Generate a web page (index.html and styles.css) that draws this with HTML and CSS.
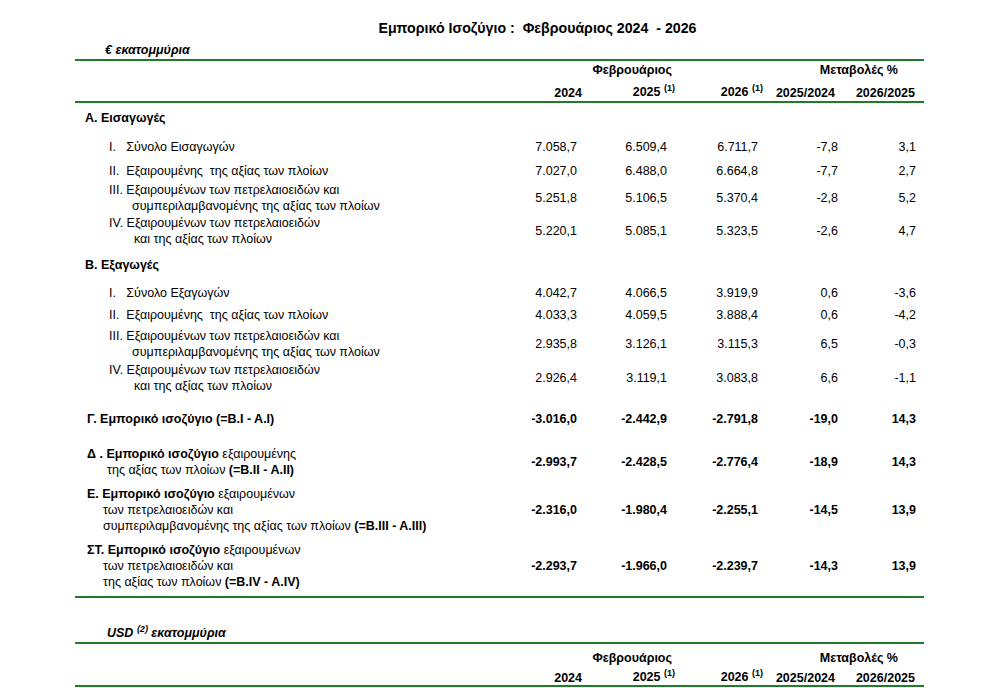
FILE: index.html
```html
<!DOCTYPE html>
<html lang="el">
<head>
<meta charset="utf-8">
<title>Εμπορικό Ισοζύγιο</title>
<link rel="stylesheet" href="styles.css">
</head>
<body>
<div class="page">
  <h1 class="title">Εμπορικό Ισοζύγιο :  Φεβρουάριος 2024  - 2026</h1>

  <div class="unit">€ εκατομμύρια</div>
  <div class="head">
    <div class="row hr1">
      <div></div><div></div>
      <div class="feb">Φεβρουάριος</div>
      <div></div>
      <div class="chg">Μεταβολές %</div>
    </div>
    <div class="row hr2">
      <div></div>
      <div class="h h1">2024</div>
      <div class="h h2">2025 <sup>(1)</sup></div>
      <div class="h h3">2026 <sup>(1)</sup></div>
      <div class="h h4">2025/2024</div>
      <div class="h h5">2026/2025</div>
    </div>
  </div>

  <div class="body">
    <div class="row r30"><div class="sec">A. Εισαγωγές</div></div>
    <div class="row r27"><div class="item">I.   Σύνολο Εισαγωγών</div><div class="v">7.058,7</div><div class="v">6.509,4</div><div class="v">6.711,7</div><div class="v">-7,8</div><div class="v">3,1</div></div>
    <div class="row r21"><div class="item">II.  Εξαιρουμένης  της αξίας των πλοίων</div><div class="v">7.027,0</div><div class="v">6.488,0</div><div class="v">6.664,8</div><div class="v">-7,7</div><div class="v">2,7</div></div>
    <div class="row r34"><div class="item">III. Εξαιρουμένων των πετρελαιοειδών και<span class="l2 i23">συμπεριλαμβανομένης της αξίας των πλοίων</span></div><div class="v">5.251,8</div><div class="v">5.106,5</div><div class="v">5.370,4</div><div class="v">-2,8</div><div class="v">5,2</div></div>
    <div class="row r32"><div class="item">IV. Εξαιρουμένων των πετρελαιοειδών<span class="l2 i25">και της αξίας των πλοίων</span></div><div class="v">5.220,1</div><div class="v">5.085,1</div><div class="v">5.323,5</div><div class="v">-2,6</div><div class="v">4,7</div></div>

    <div class="row r36"><div class="sec">B. Εξαγωγές</div></div>
    <div class="row r19"><div class="item">I.   Σύνολο Εξαγωγών</div><div class="v">4.042,7</div><div class="v">4.066,5</div><div class="v">3.919,9</div><div class="v">0,6</div><div class="v">-3,6</div></div>
    <div class="row r26"><div class="item">II.  Εξαιρουμένης  της αξίας των πλοίων</div><div class="v">4.033,3</div><div class="v">4.059,5</div><div class="v">3.888,4</div><div class="v">0,6</div><div class="v">-4,2</div></div>
    <div class="row r30"><div class="item">III. Εξαιρουμένων των πετρελαιοειδών και<span class="l2 i23">συμπεριλαμβανομένης της αξίας των πλοίων</span></div><div class="v">2.935,8</div><div class="v">3.126,1</div><div class="v">3.115,3</div><div class="v">6,5</div><div class="v">-0,3</div></div>
    <div class="row r40"><div class="item">IV. Εξαιρουμένων των πετρελαιοειδών<span class="l2 i25">και της αξίας των πλοίων</span></div><div class="v">2.926,4</div><div class="v">3.119,1</div><div class="v">3.083,8</div><div class="v">6,6</div><div class="v">-1,1</div></div>

    <div class="row r42 bold"><div class="tot">Γ. Εμπορικό ισοζύγιο (=B.I - A.I)</div><div class="v">-3.016,0</div><div class="v">-2.442,9</div><div class="v">-2.791,8</div><div class="v">-19,0</div><div class="v">14,3</div></div>
    <div class="row r44 bold"><div class="tot">Δ . Εμπορικό ισοζύγιο <span class="n">εξαιρουμένης</span><span class="l2 i20"><span class="n">της αξίας των πλοίων </span>(=B.II - A.II)</span></div><div class="v">-2.993,7</div><div class="v">-2.428,5</div><div class="v">-2.776,4</div><div class="v">-18,9</div><div class="v">14,3</div></div>
    <div class="row r52 bold"><div class="tot">E. Εμπορικό ισοζύγιο <span class="n">εξαιρουμένων</span><span class="l2 i16 n">των πετρελαιοειδών και</span><span class="l2 i16"><span class="n">συμπεριλαμβανομένης της αξίας των πλοίων </span>(=B.III - A.III)</span></div><div class="v">-2.316,0</div><div class="v">-1.980,4</div><div class="v">-2.255,1</div><div class="v">-14,5</div><div class="v">13,9</div></div>
    <div class="row r60 bold"><div class="tot">ΣΤ. Εμπορικό ισοζύγιο <span class="n">εξαιρουμένων</span><span class="l2 i16 n">των πετρελαιοειδών και</span><span class="l2 i16"><span class="n">της αξίας των πλοίων </span>(=B.IV - A.IV)</span></div><div class="v">-2.293,7</div><div class="v">-1.966,0</div><div class="v">-2.239,7</div><div class="v">-14,3</div><div class="v">13,9</div></div>
  </div>

  <div class="unit usd">USD <sup>(2)</sup> εκατομμύρια</div>
  <div class="head head-usd">
    <div class="row hr1">
      <div></div><div></div>
      <div class="feb">Φεβρουάριος</div>
      <div></div>
      <div class="chg">Μεταβολές %</div>
    </div>
    <div class="row hr2">
      <div></div>
      <div class="h h1">2024</div>
      <div class="h h2">2025 <sup>(1)</sup></div>
      <div class="h h3">2026 <sup>(1)</sup></div>
      <div class="h h4">2025/2024</div>
      <div class="h h5">2026/2025</div>
    </div>
  </div>
</div>
</body>
</html>
```

FILE: styles.css
```css
html, body {
  margin: 0;
  padding: 0;
  background: #ffffff;
}
body {
  font-family: "Liberation Sans", Arial, sans-serif;
  font-size: 12.5px;
  color: #000;
}
.page {
  width: 849px;
  margin-left: 75px;
}
.title {
  margin: 0;
  padding-top: 20px;
  padding-left: 76px;
  font-size: 14.2px;
  line-height: 16px;
  font-weight: bold;
  text-align: center;
  white-space: pre;
}
.unit {
  margin-top: 6px;
  padding-left: 30px;
  padding-bottom: 1px;
  line-height: 16px;
  font-weight: bold;
  font-style: italic;
  border-bottom: 2px solid #237a2b;
}
.unit.usd {
  margin-top: 27px;
  padding-left: 32px;
  padding-bottom: 0;
}
.unit sup, .h sup {
  font-size: 9px;
  vertical-align: 0;
  position: relative;
  top: -5px;
}
.head {
  border-bottom: 2px solid #237a2b;
  font-weight: bold;
  padding-top: 1px;
  padding-bottom: 1px;
}
.head-usd {
  padding-top: 6px;
  padding-bottom: 0;
}
.head-usd .hr2 { margin-top: 3px; }
.row {
  display: grid;
  grid-template-columns: 412px 90px 90px 91px 80px 78px;
  padding-right: 8px;
  align-items: center;
}
.hr1 { height: 16px; line-height: 16px; }
.hr2 { height: 16px; line-height: 16px; margin-top: 6px; }
.feb { text-align: right; margin-right: -5px; }
.chg { grid-column: 5 / 7; text-align: right; padding-right: 18px; }
.h { text-align: right; white-space: nowrap; }
.h1 { margin-right: -5px; }
.h2 { margin-right: -8px; }
.h3 { margin-right: -5px; }
.h4 { margin-right: 3px; }
.h5 { margin-right: 1px; }

.body {
  border-bottom: 2px solid #237a2b;
}
.r19 { height: 19px; }
.r21 { height: 21px; }
.r26 { height: 26px; }
.r27 { height: 27px; }
.r30 { height: 30px; }
.r32 { height: 32px; }
.r34 { height: 34px; }
.r36 { height: 36px; }
.r40 { height: 40px; }
.r42 { height: 42px; }
.r44 { height: 44px; }
.r52 { height: 52px; }
.r60 { height: 60px; }

.row > div { line-height: 16px; }
.sec {
  padding-left: 10px;
  font-weight: bold;
}
.item {
  padding-left: 34px;
  white-space: pre;
}
.tot {
  padding-left: 12px;
  white-space: pre;
}
.l2 { display: block; }
.i23 { padding-left: 23px; }
.i25 { padding-left: 25px; }
.i20 { padding-left: 20px; }
.i16 { padding-left: 16px; }
.v { text-align: right; }
.bold { font-weight: bold; }
.bold .n { font-weight: normal; }
```
